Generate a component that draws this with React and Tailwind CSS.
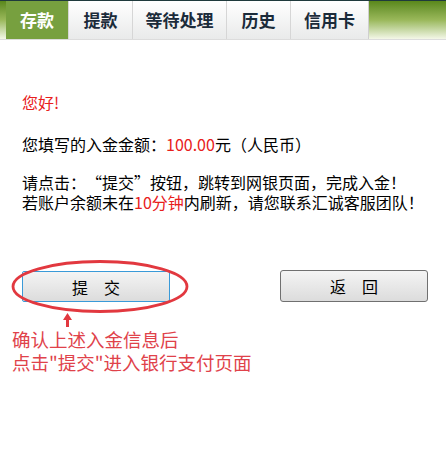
import React from "react";

const tabs = [
  { label: "存款", w: "w-[62px]", active: true },
  { label: "提款", w: "w-[64px]" },
  { label: "等待处理", w: "w-[94px]" },
  { label: "历史", w: "w-[64px]" },
  { label: "信用卡", w: "w-[78px]" },
];

export default function App() {
  return (
    <div className="relative w-[446px] h-[453px] bg-white overflow-hidden font-['Noto_Sans_CJK_SC','Noto_Sans',sans-serif] text-black">
      {/* tab bar */}
      <div className="h-[40px] border-t border-[#1f3a3c] border-b border-b-[#dcdcdc] bg-gradient-to-b from-[#5a881a] via-[#9ab85a] to-[#f4f7e8] flex pl-[6px]">
        {tabs.map((t) =>
          t.active ? (
            <div
              key={t.label}
              className={`${t.w} h-full flex items-center justify-center bg-[#77a03f] text-white font-bold text-[17px]`}
            >
              {t.label}
            </div>
          ) : (
            <div
              key={t.label}
              className={`${t.w} h-full flex items-center justify-center bg-gradient-to-b from-white to-[#e9eaea] border-l border-[#d6d6d6] text-[#1b2b3a] font-bold text-[17px]`}
            >
              {t.label}
            </div>
          )
        )}
        <div className="w-px h-full bg-[#cfcfcf]" />
      </div>

      {/* content */}
      <div className="pl-[22px] pt-[52px] text-[16px] leading-[20px]">
        <p className="text-[#e8201c]">您好!</p>
        <p className="mt-[22px]">
          您填写的入金金额：<span className="text-[#e8201c]">100.00</span>元（人民币）
        </p>
        <p className="mt-[18px]">
          请点击：<span className="inline-block w-[16px] text-right">“</span>提交
          <span className="inline-block w-[16px] text-left">”</span>按钮，跳转到网银页面，完成入金！
        </p>
        <p>
          若账户余额未在<span className="text-[#e8201c]">10分钟</span>内刷新，请您联系汇诚客服团队！
        </p>
      </div>

      {/* buttons */}
      <div className="flex pl-[22px] mt-[59px] gap-[110px]">
        <button className="w-[148px] h-[31px] border border-[#3a9ad8] rounded-[2px] bg-gradient-to-b from-[#f4f4f4] to-[#dcdcdc] text-[16px] tracking-[16px] pl-[16px]">
          提交
        </button>
        <button className="w-[148px] h-[32px] -mt-px border border-[#707070] rounded-[3px] bg-gradient-to-b from-[#f4f4f4] to-[#dcdcdc] text-[16px] tracking-[16px] pl-[16px]">
          返回
        </button>
      </div>

      {/* annotation */}
      <svg className="absolute left-0 top-[255px]" width="200" height="75" viewBox="0 0 200 75">
        <ellipse cx="100" cy="31.5" rx="87" ry="25" fill="none" stroke="#e2383f" strokeWidth="2.8" />
        <path d="M67.5 58 L63 65 L66 65 L66 72 L69 72 L69 65 L72 65 Z" fill="#e2383f" />
      </svg>

      <div className="pl-[12px] mt-[26px] text-[18.5px] leading-[23px] text-[#e0424a]">
        <p>确认上述入金信息后</p>
        <p>点击"提交"进入银行支付页面</p>
      </div>
    </div>
  );
}
